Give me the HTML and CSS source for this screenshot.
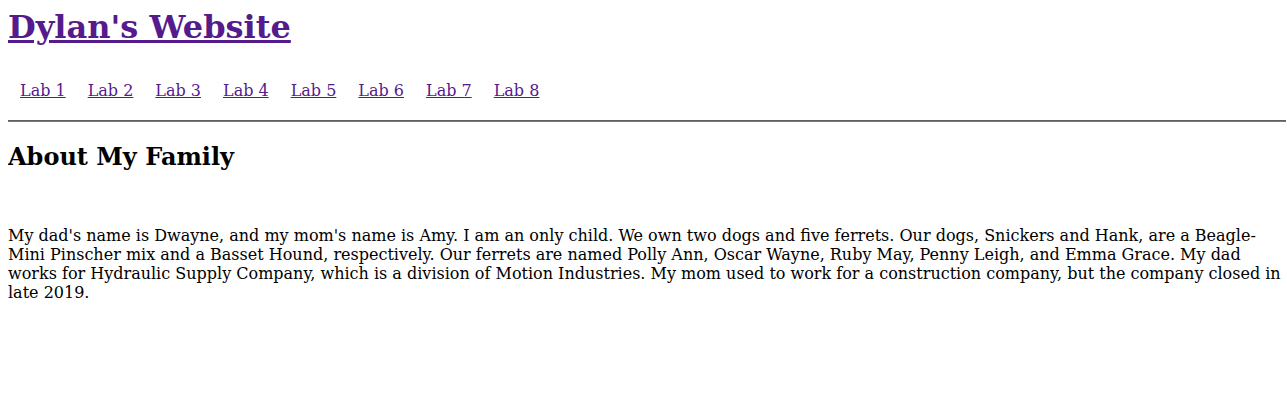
FILE: index.html
```html
<!DOCTYPE html>
<html lang="en">
<head>
<meta charset="utf-8">
<title>Dylan's Website</title>
<link rel="stylesheet" href="styles.css">
</head>
<body>
<header class="site-header">
  <h1 class="site-title"><a href="#">Dylan's Website</a></h1>
  <nav class="nav">
    <ul class="nav-list">
      <li><a href="#">Lab 1</a></li>
      <li><a href="#">Lab 2</a></li>
      <li><a href="#">Lab 3</a></li>
      <li><a href="#">Lab 4</a></li>
      <li><a href="#">Lab 5</a></li>
      <li><a href="#">Lab 6</a></li>
      <li><a href="#">Lab 7</a></li>
      <li><a href="#">Lab 8</a></li>
    </ul>
  </nav>
  <hr class="rule">
</header>
<main class="content">
  <h2 class="section-title">About My Family</h2>
  <p class="text">My dad's name is Dwayne, and my mom's name is Amy. I am an only child. We own two dogs and five ferrets. Our dogs, Snickers and Hank, are a Beagle-Mini Pinscher mix and a Basset Hound, respectively. Our ferrets are named Polly Ann, Oscar Wayne, Ruby May, Penny Leigh, and Emma Grace. My dad works for Hydraulic Supply Company, which is a division of Motion Industries. My mom used to work for a construction company, but the company closed in late 2019.</p>
</main>
</body>
</html>
```

FILE: styles.css
```css
html, body {
  background: #ffffff;
}
body {
  margin: 8px 1px 8px 8px;
  font-family: "DejaVu Serif", serif;
  font-size: 16px;
  color: #000000;
}
a {
  color: #551a8b;
}
.site-title {
  margin: 0;
  font-size: 32px;
  font-weight: bold;
}
.nav-list {
  list-style: none;
  margin: 35px 0 0 0;
  padding: 0 0 0 12px;
  display: flex;
  gap: 22px;
}
.rule {
  margin: 20px 0 0 0;
  border: 0;
  border-top: 1px solid #5e5e5e;
  border-bottom: 1px solid #7a7a7a;
  height: 0;
}
.section-title {
  margin: 20px 0 0 0;
  font-size: 24px;
  font-weight: bold;
}
.text {
  margin: 55px 0 0 0;
}
```
